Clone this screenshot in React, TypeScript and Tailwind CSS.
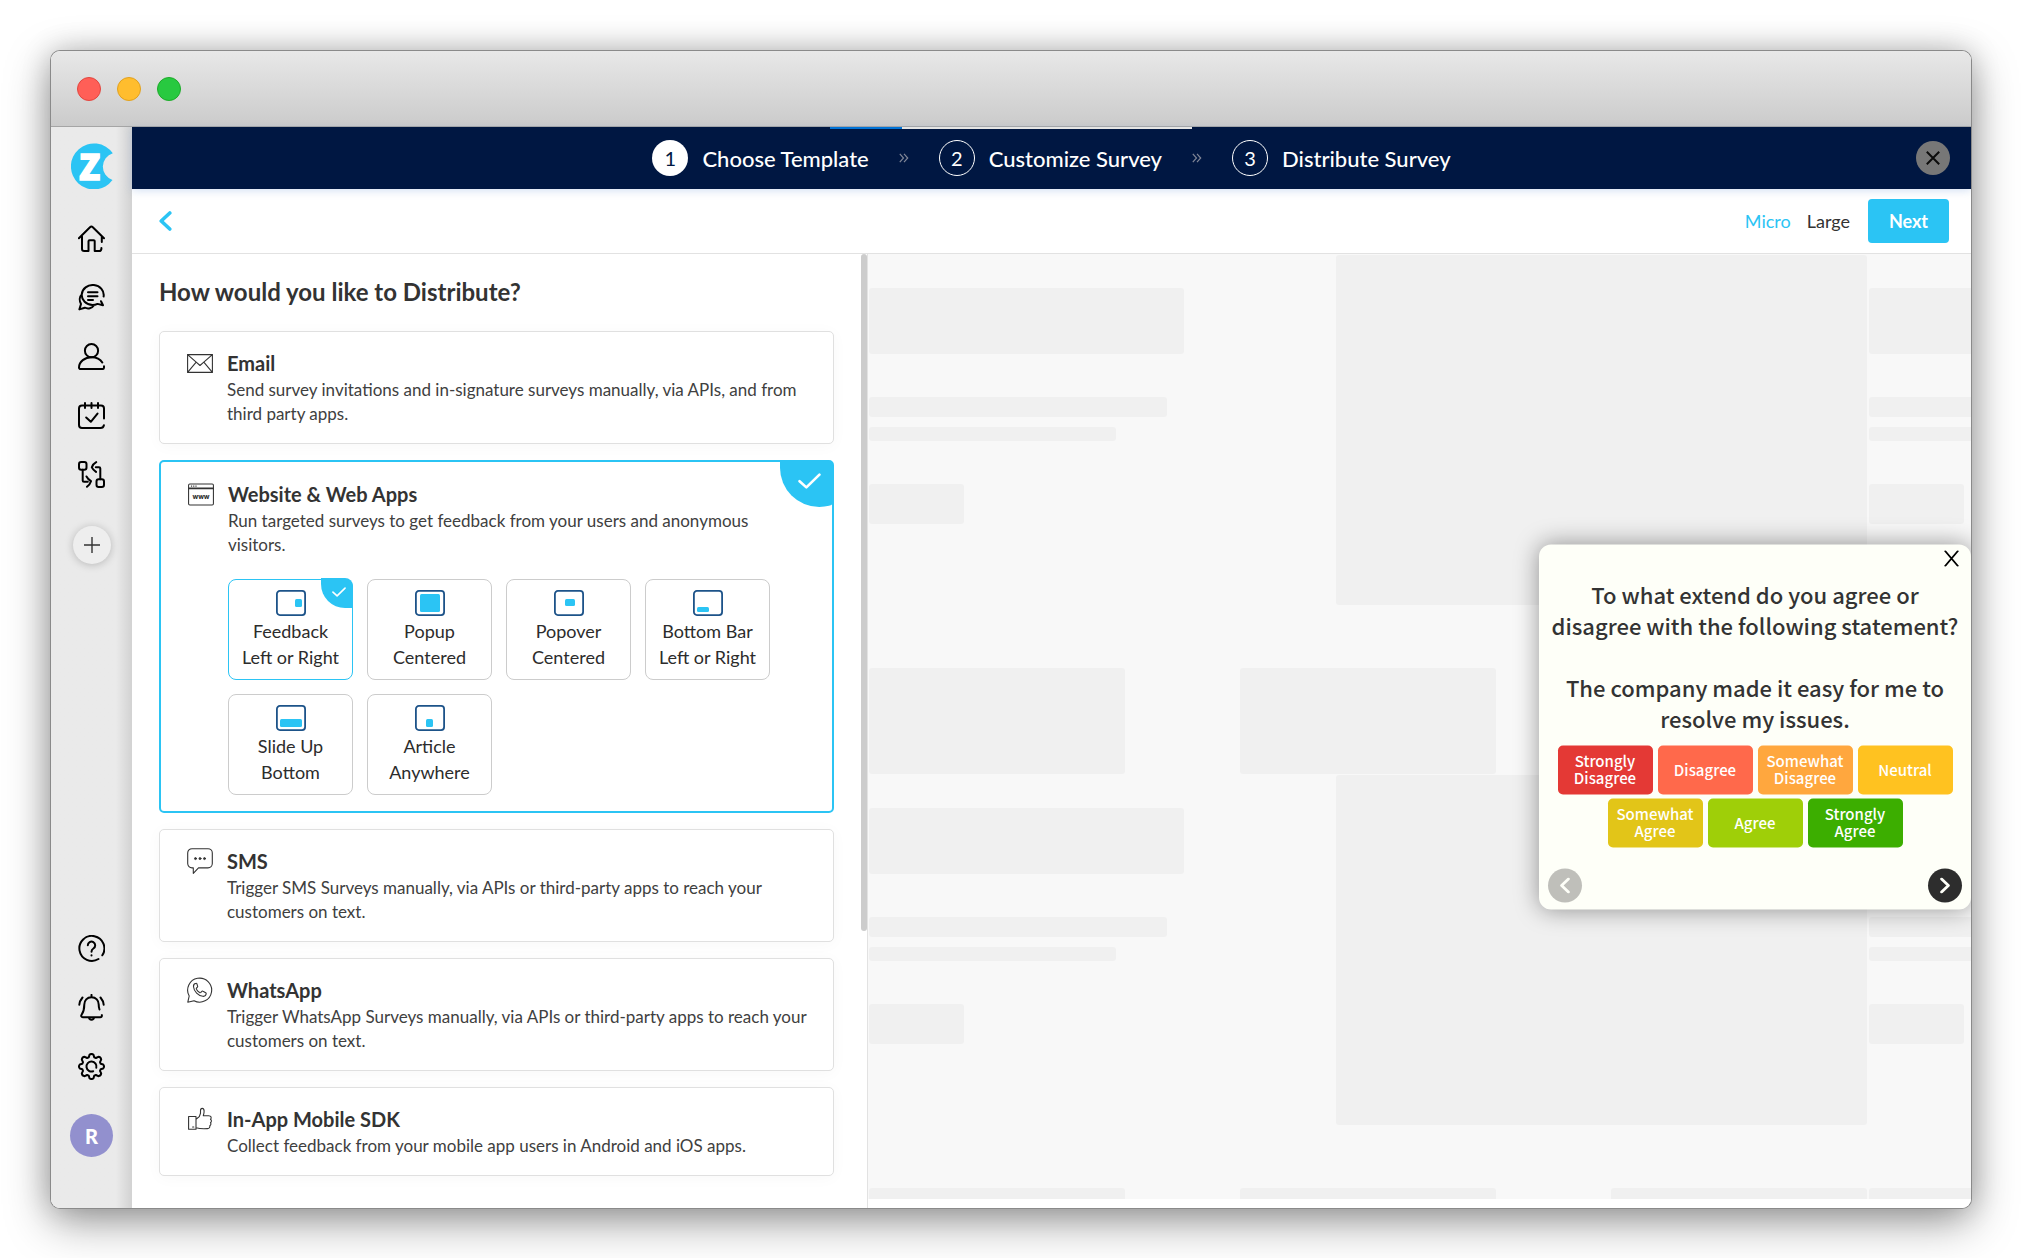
import type { ReactNode } from "react";

function Icon({ children, label }: { children: ReactNode; label: string }) {
  return (
    <button type="button" aria-label={label} className="h-[27px] w-[27px]">
      <svg viewBox="0 0 27 27" className="h-[27px] w-[27px]" fill="none" stroke="#000" strokeWidth="2" strokeLinecap="round" strokeLinejoin="round">
        {children}
      </svg>
    </button>
  );
}

function Logo() {
  return (
    <svg viewBox="0 0 46 46" className="ml-1 h-[46px] w-[46px]" role="img" aria-label="Z">
      <path d="M41.800 10.300 A23 23 0 1 0 41.500 37 A14 14 0 0 1 41.800 10.300 Z" fill="#2bc4f4" />
      <text x="18.500" y="37" textAnchor="middle" fill="#fff" stroke="#fff" strokeWidth="1.500" fontFamily="'Noto Sans CJK SC', sans-serif" fontWeight="900" fontSize="35">
        Z
      </text>
    </svg>
  );
}

function Sidebar() {
  return (
    <nav className="flex w-[81px] shrink-0 flex-col items-center bg-[#eaeaea] bg-linear-to-l from-[#d2d2d2] to-[#eaeaea] to-[16px] pb-[51px] pt-4">
      <Logo />
      <div className="mt-9 flex flex-col gap-8">
        <Icon label="Home">
          <path d="M.9 13.3 12 2.2a2 2 0 0 1 2.8 0L26 13.3M4 11.5v12.3A2.2 2.2 0 0 0 6.2 26h4.3V16.2a1 1 0 0 1 1-1h4.2a1 1 0 0 1 1 1V26h4.4a2.4 2.4 0 0 0 2.3-2.2v-.9M23.8 11.5V17" />
        </Icon>
        <Icon label="Responses">
          <path d="M25.6 12.500A11 10 0 1 0 14.500 21c1.700 0 3.600-.4 5-1.100l5.500 1.300-2-4M10 8.300h9.500M10 12.200h9.500M10 16h5M3.800 10.500C1.600 12.500 1 16.500 3 20l-1.600 5.400 5.400-1.700c3.200 1.500 7.200.6 9-2.200" />
        </Icon>
        <Icon label="Contacts">
          <circle cx="13.500" cy="7.700" r="6.600" />
          <path d="M24.300 19.500C22.500 16.500 18.500 14.300 13.500 14.300 7 14.300 1 18.500 1 24.500a1.500 1.500 0 0 0 1.500 1.600h21.800a1.700 1.700 0 0 0 1.700-1.700v-1.200" />
        </Icon>
        <Icon label="Tasks">
          <path d="M26 16.500V6.500a3 3 0 0 0-3-3H4a3 3 0 0 0-3 3V23a3 3 0 0 0 3 3h18.500a3.500 3.500 0 0 0 3.400-2.800M7 1v5M13.500 1v5M20 1v5M8.200 15.500l4.600 4.300 6.700-8.200" />
        </Icon>
        <Icon label="Workflows">
          <rect x="1" y="1" width="7.500" height="7.800" rx="2.200" />
          <rect x="18.500" y="18.200" width="7.500" height="7.800" rx="2.200" />
          <path d="M4.700 8.800V19.500a1.300 1.300 0 0 0 1.300 1.300h3.800M8.500 15.500c1.500 2.800 2.500 3.500 4.500 4.700-.7 2.300-2 4-4 5.600M22.300 18.200V7.500A1.300 1.300 0 0 0 21 6.200h-3.200M18.200 1.100c-2.300 1.200-3.700 3-4.400 5.300 1 2 2.400 3.300 4.200 4.500" />
        </Icon>
      </div>
      <button type="button" aria-label="Add" className="mt-[38px] flex h-[38px] w-[38px] items-center justify-center rounded-full bg-[#eeeeee] shadow-[0_1px_8px_rgba(0,0,0,0.22)]">
        <svg viewBox="0 0 16 16" className="h-4 w-4" stroke="#333" strokeWidth="1.400">
          <path d="M8 0v16M0 8h16" />
        </svg>
      </button>
      <div className="mt-auto flex flex-col gap-8">
        <Icon label="Help">
          <path d="M20.500 24A12.500 12.500 0 1 1 24.300 20.300" />
          <path d="M9.800 10.300a3.700 3.700 0 1 1 5.600 3.200c-1.300.8-1.900 1.300-1.900 3.200M13.500 20.300v.3" />
        </Icon>
        <Icon label="Notifications">
          <path d="M21.500 15.500c-.6-1.500-.8-3.200-.8-5 0-4-2.700-7.300-7.200-7.300S6.300 6.500 6.300 10.500c0 6-1.300 8.200-2.700 10.200-.8 1.200-.3 2.600 1.200 2.600h17.400c1.300 0 1.900-1 1.600-2.200M13.500 3V.9M11 23.500c.3 3 4.700 3 5 0M4.500 3.500C2.800 5.500 1.500 7.800 1.300 10.800M22.500 3.500c1.700 2 3 4.300 3.200 7.300" />
        </Icon>
        <Icon label="Settings">
          <path d="M11.500 1.800Q13.500.2 15.500 1.800L16.200 4.300 17.900 5 20.300 3.800Q22.900 4 23.200 6.600L22 9.100 22.700 10.800 25.200 11.500Q26.800 13.500 25.200 15.500L22.700 16.200 22 17.900 23.200 20.400Q22.900 23 20.300 23.200L17.900 22 16.200 22.700 15.500 25.200Q13.500 26.800 11.500 25.200L10.800 22.700 9.100 22 6.700 23.200Q4.100 23 3.800 20.400L5 17.900 4.300 16.200 1.800 15.500Q.2 13.500 1.800 11.500L4.300 10.800 5 9.100 3.800 6.600Q4.100 4 6.700 3.800L9.100 5 10.800 4.300Z" />
          <path d="M15.200 18.200A5 5 0 1 1 18.300 14.800" />
        </Icon>
      </div>
      <button type="button" className="mt-[34px] flex h-[43px] w-[43px] items-center justify-center rounded-full bg-[#9290ce] text-xl font-black text-white">
        R
      </button>
    </nav>
  );
}

function Step({ n, label, active }: { n: number; label: string; active?: boolean }) {
  return (
    <li className="flex items-center gap-[14px]">
      <span
        className={
          active
            ? "flex h-9 w-9 items-center justify-center rounded-full bg-white text-xl text-[#001742]"
            : "flex h-9 w-9 items-center justify-center rounded-full border border-white text-xl text-white"
        }
      >
        {n}
      </span>
      <span className="text-[22px] font-medium text-white">{label}</span>
    </li>
  );
}

function Chevrons() {
  return (
    <li aria-hidden="true">
      <svg viewBox="0 0 10 10" className="h-[10px] w-[10px]" fill="none" stroke="#7e8596" strokeWidth="1.200">
        <path d="M.8.8 4.500 5 .8 9.200M5 .8 8.700 5 5 9.200" />
      </svg>
    </li>
  );
}

function Header() {
  return (
    <header className="relative z-10 flex h-[62px] shrink-0 items-center justify-center bg-[#001742] shadow-[0_2px_8px_rgba(120,160,220,0.3)]">
      <div className="absolute top-0 left-[698px] flex h-[2px] w-[362px] bg-[#e4e4e4]">
        <div className="w-1/5 bg-[#0072d6]" />
      </div>
      <ol className="flex items-center gap-[30px]">
        <Step n={1} label="Choose Template" active />
        <Chevrons />
        <Step n={2} label="Customize Survey" />
        <Chevrons />
        <Step n={3} label="Distribute Survey" />
      </ol>
      <button type="button" aria-label="Close" className="absolute right-[21px] flex h-[34px] w-[34px] items-center justify-center rounded-full bg-[#777777]">
        <svg viewBox="0 0 14 14" className="h-[14px] w-[14px]" stroke="#0c0c0c" strokeWidth="2">
          <path d="M.8.8 13.200 13.200M13.200.8.8 13.200" />
        </svg>
      </button>
    </header>
  );
}

function Toolbar() {
  return (
    <div className="flex h-[65px] shrink-0 items-center border-b border-[#e2e2e2] pr-[22px] pl-[27px]">
      <button type="button" aria-label="Back">
        <svg viewBox="0 0 13 20" className="h-5 w-[13px]" fill="none" stroke="#2bc4f4" strokeWidth="3.600" strokeLinejoin="round" strokeLinecap="round">
          <path d="M10.800 2 2.200 10 10.800 18" />
        </svg>
      </button>
      <button type="button" className="ml-auto text-lg text-[#2bc4f4]">Micro</button>
      <button type="button" className="ml-4 text-lg text-[#333]">Large</button>
      <button type="button" className="ml-[18px] h-11 w-[81px] rounded bg-[#2bc4f4] text-lg font-bold text-white">Next</button>
    </div>
  );
}

const thin = { fill: "none", stroke: "#333", strokeWidth: 1.1, strokeLinejoin: "round" as const, strokeLinecap: "round" as const };

const channelIcons: Record<string, ReactNode> = {
  email: (
    <svg viewBox="0 0 26 19" className="h-[19px] w-[26px]" {...thin}>
      <path d="M.6.6h24.800v17.800H.6zM.6.6l8.600 7.600 3.800 3.300 3.800-3.300L25.400.6M.6 18.400 9.200 8.200M25.400 18.400 16.800 8.200" />
    </svg>
  ),
  web: (
    <svg viewBox="0 0 27 23" className="h-[23px] w-[27px]" {...thin}>
      <rect x=".6" y=".6" width="25.800" height="21.800" rx="1.300" />
      <path d="M.6 4.900h25.800M.6 5.500h25.800M3.500 2.800h.4M5.800 2.800h.4M8.100 2.800h.4" />
      <text x="13.500" y="16" textAnchor="middle" fill="#222" stroke="none" fontFamily="Inter, sans-serif" fontWeight="700" fontSize="7">
        www
      </text>
    </svg>
  ),
  sms: (
    <svg viewBox="0 0 26 26" className="h-[26px] w-[26px]" {...thin}>
      <path d="M5 .7h16a4.300 4.300 0 0 1 4.300 4.300v10.600a4.300 4.300 0 0 1-4.300 4.300h-9.500L6.300 25.300v-5.400H5A4.300 4.300 0 0 1 .7 15.600V5A4.300 4.300 0 0 1 5 .7Z" />
      <g strokeWidth=".9">
        <circle cx="8.500" cy="10.600" r="1" fill="#333" />
        <circle cx="13" cy="10.600" r="1" fill="#333" />
        <circle cx="17.500" cy="10.600" r="1" fill="#333" />
      </g>
    </svg>
  ),
  whatsapp: (
    <svg viewBox="0 0 26 26" className="h-[26px] w-[26px]" {...thin}>
      <path d="M.8 25.200 2.200 19A12 12 0 1 1 7 23.700Z" />
      <path d="M9 6.300c-1.500.3-2.700 1.700-2.500 3.500.5 4.800 4.700 9 9.300 9.500 1.800.2 3.200-.9 3.400-2.500.1-.5-.1-.8-.5-1.100l-2.700-1.500c-.5-.3-.9-.2-1.200.2l-.9 1c-.4.400-.8.4-1.300.100-1.400-.9-2.400-1.900-3.200-3.300-.2-.4-.2-.8.2-1.200l.8-.8c.4-.4.400-.7.200-1.200L9.900 6.800c-.2-.4-.5-.6-.9-.5Z" />
    </svg>
  ),
  thumb: (
    <svg viewBox="0 0 26 24" className="h-6 w-[26px]" {...thin}>
      <path d="M1.600 9.500H9v12.800H1.600zM5.600 20h1.200M9 12.300l3.300-2.700 1.200-3.300V3.700c0-3 3.400-3.200 3.600.2.100 2-.3 3.500-.8 4.900h5.400c2.600 0 3.100 2.200 1.800 3.500 1.300 1 1.100 2.600 0 3.400.8 1.200.4 2.500-.7 3 .3 1.700-.5 2.900-2.300 2.900-4.600.4-7.500.3-11.500-.9" />
    </svg>
  ),
};

function ChannelCard({ icon, title, lines, selected, children }: { icon: string; title: string; lines: string[]; selected?: boolean; children?: ReactNode }) {
  return (
    <section
      className={
        selected
          ? "relative flex gap-[14px] rounded-[5px] border-2 border-[#2bc4f4] bg-white pt-[18px] pb-4 pl-[27px]"
          : "relative flex gap-[14px] rounded-[5px] border border-[#e0e0e0] bg-white py-[17px] pl-[27px] shadow-[0_2px_16px_rgba(0,0,0,0.03)]"
      }
    >
      <div className="flex h-7 w-[26px] shrink-0 items-center">{channelIcons[icon]}</div>
      <div className="min-w-0 flex-1">
        <h3 className="text-xl leading-7 font-bold text-[#333]">{title}</h3>
        <p className="mt-px text-[17px] leading-6 text-[#404040]">
          {lines.map((line) => (
            <span key={line} className="block">{line}</span>
          ))}
        </p>
        {children}
      </div>
      {selected && (
        <div className="absolute -top-px -right-px flex h-[46px] w-[53px] items-center justify-center rounded-tr-[4px] rounded-bl-[40px] bg-[#2bc4f4] pb-[6px] pl-[6px] [border-bottom-right-radius:14px_4px]">
          <Tick className="h-4 w-[23px]" />
        </div>
      )}
    </section>
  );
}

function Tick({ className }: { className: string }) {
  return (
    <svg viewBox="0 0 22 15" className={className} fill="none" stroke="#fff" strokeWidth="2.500" strokeLinecap="round" strokeLinejoin="round">
      <path d="M1.500 7.700 8 13.600 20.500 1.400" />
    </svg>
  );
}

type Option = { top: string; bottom: string; box: [number, number, number, number]; selected?: boolean };

const options: Option[] = [
  { top: "Feedback", bottom: "Left or Right", box: [19, 9, 7, 8], selected: true },
  { top: "Popup", bottom: "Centered", box: [5, 4, 20, 18] },
  { top: "Popover", bottom: "Centered", box: [11, 9, 10, 7] },
  { top: "Bottom Bar", bottom: "Left or Right", box: [4, 17, 12, 5] },
  { top: "Slide Up", bottom: "Bottom", box: [4, 14, 22, 8] },
  { top: "Article", bottom: "Anywhere", box: [11, 14, 7, 8] },
];

function OptionCard({ top, bottom, box, selected }: Option) {
  const [x, y, w, h] = box;
  return (
    <button
      type="button"
      aria-pressed={!!selected}
      className={
        selected
          ? "relative flex h-[101px] w-[125px] flex-col items-center rounded-lg border border-[#2bc4f4] pt-[10px] text-lg leading-[26px] text-[#2c2c2c]"
          : "relative flex h-[101px] w-[125px] flex-col items-center rounded-lg border border-[#cccccc] pt-[10px] text-lg leading-[26px] text-[#2c2c2c]"
      }
    >
      <svg viewBox="0 0 30 26" className="mb-[2px] h-[26px] w-[30px]">
        <rect x=".9" y=".9" width="28.200" height="24.200" rx="3" fill="#fff" stroke="#1d5389" strokeWidth="1.800" />
        <rect x={x} y={y} width={w} height={h} rx="1.500" fill="#2bc4f4" />
      </svg>
      <span>{top}</span>
      <span>{bottom}</span>
      {selected && (
        <span className="absolute -top-[2px] -right-px flex h-[30px] w-8 items-center justify-center rounded-tr-lg rounded-bl-[24px] bg-[#2bc4f4] pb-[2px] pl-1">
          <Tick className="h-[10px] w-[14px]" />
        </span>
      )}
    </button>
  );
}

function DistributePanel() {
  return (
    <div className="flex w-2/5 shrink-0 border-r border-[#e2e2e2] bg-white">
      <div className="min-w-0 flex-1 overflow-hidden pt-[22px] pr-[27px] pl-[27px]">
        <h2 className="text-2xl leading-8 font-bold text-[#333]">How would you like to Distribute?</h2>
        <div className="mt-[23px] flex flex-col gap-4">
          <ChannelCard icon="email" title="Email" lines={["Send survey invitations and in-signature surveys manually, via APIs, and from", "third party apps."]} />
          <ChannelCard icon="web" title="Website & Web Apps" selected lines={["Run targeted surveys to get feedback from your users and anonymous", "visitors."]}>
            <div className="mt-[22px] flex flex-wrap gap-[14px]">
              {options.map((o) => (
                <OptionCard key={o.top} {...o} />
              ))}
            </div>
          </ChannelCard>
          <ChannelCard icon="sms" title="SMS" lines={["Trigger SMS Surveys manually, via APIs or third-party apps to reach your", "customers on text."]} />
          <ChannelCard icon="whatsapp" title="WhatsApp" lines={["Trigger WhatsApp Surveys manually, via APIs or third-party apps to reach your", "customers on text."]} />
          <ChannelCard icon="thumb" title="In-App Mobile SDK" lines={["Collect feedback from your mobile app users in Android and iOS apps."]} />
        </div>
      </div>
      <div className="w-[6px]">
        <div className="h-[71%] rounded-full bg-[#cccccc]" />
      </div>
    </div>
  );
}

function Tile() {
  return (
    <div className="h-[520px] w-[1000px] shrink-0 pt-px pr-[2px]">
      <div className="flex h-[350px]">
        <div className="w-[467px] pt-[33px]">
          <div className="h-[66px] w-[315px] rounded-[3px] bg-[#f0f0f0]" />
          <div className="mt-[43px] h-5 w-[298px] rounded-[3px] bg-[#f0f0f0]" />
          <div className="mt-[10px] h-[14px] w-[247px] rounded-[3px] bg-[#f0f0f0]" />
          <div className="mt-[43px] h-10 w-[95px] rounded-[3px] bg-[#f0f0f0]" />
        </div>
        <div className="flex-1 rounded-[3px] bg-[#f0f0f0]" />
      </div>
      <div className="mt-[63px] flex justify-between">
        <div className="h-[106px] w-64 rounded-[3px] bg-[#f0f0f0]" />
        <div className="h-[106px] w-64 rounded-[3px] bg-[#f0f0f0]" />
        <div className="h-[106px] w-64 rounded-[3px] bg-[#f0f0f0]" />
      </div>
    </div>
  );
}

function Answer({ label, color }: { label: string; color: string }) {
  return (
    <button type="button" className={`h-[49px] w-[95px] rounded-[5px] px-2 pb-[2px] text-[15px] leading-[17px] font-medium text-white ${color}`}>
      {label}
    </button>
  );
}

function SurveyPopup() {
  return (
    <div className="absolute top-1/2 right-0 flex h-[365px] w-[432px] -translate-y-1/2 flex-col rounded-xl bg-[#fefff8] pt-[34px] font-['Noto_Sans_CJK_SC',sans-serif] shadow-[0_0_24px_rgba(0,0,0,0.4)]">
      <button type="button" aria-label="Close survey" className="absolute top-[6px] right-3">
        <svg viewBox="0 0 15 16" className="h-4 w-[15px]" stroke="#000" strokeWidth="1.800">
          <path d="M.7 0 14.300 16M14.300 0 .7 16" />
        </svg>
      </button>
      <p className="text-center text-[22px] leading-[31px] font-medium text-[#333]">
        To what extend do you agree or
        <br />
        disagree with the following statement?
        <br />
        <br />
        The company made it easy for me to
        <br />
        resolve my issues.
      </p>
      <div className="mt-3 flex justify-center gap-[5px]">
        <Answer label="Strongly Disagree" color="bg-[#e43935]" />
        <Answer label="Disagree" color="bg-[#ff694b]" />
        <Answer label="Somewhat Disagree" color="bg-[#ffa73e]" />
        <Answer label="Neutral" color="bg-[#ffc220]" />
      </div>
      <div className="mt-1 flex justify-center gap-[5px]">
        <Answer label="Somewhat Agree" color="bg-[#e2c518]" />
        <Answer label="Agree" color="bg-[#9fcf08]" />
        <Answer label="Strongly Agree" color="bg-[#3cae00]" />
      </div>
      <div className="mt-auto flex justify-between px-[9px] pb-[7px]">
        <button type="button" aria-label="Previous" className="flex h-[34px] w-[34px] items-center justify-center rounded-full bg-[#bfbfba]">
          <svg viewBox="0 0 10 16" className="h-4 w-[10px]" fill="none" stroke="#fefff8" strokeWidth="2.800" strokeLinecap="round" strokeLinejoin="round">
            <path d="M8.400 1.500 1.600 8l6.800 6.500" />
          </svg>
        </button>
        <button type="button" aria-label="Next question" className="flex h-[34px] w-[34px] items-center justify-center rounded-full bg-[#2d2d2d]">
          <svg viewBox="0 0 10 16" className="h-4 w-[10px]" fill="none" stroke="#fefff8" strokeWidth="2.800" strokeLinecap="round" strokeLinejoin="round">
            <path d="M1.600 1.500 8.400 8l-6.800 6.500" />
          </svg>
        </button>
      </div>
    </div>
  );
}

function Preview() {
  return (
    <div className="min-w-0 flex-1 bg-white pb-[9px]">
      <div className="relative h-full overflow-hidden bg-[#f8f8f8] pl-px">
        <div className="flex">
          <Tile />
          <Tile />
        </div>
        <div className="flex">
          <Tile />
          <Tile />
        </div>
        <SurveyPopup />
      </div>
    </div>
  );
}

export default function App() {
  return (
    <div className="flex h-screen bg-white px-[51px] pt-[51px] pb-[50px] font-['Lato',sans-serif]">
      <div className="flex min-w-0 flex-1 flex-col overflow-hidden rounded-[9px] bg-white shadow-[0_0_0_1px_#8a8a8a,0_0_30px_rgba(0,0,0,0.2),0_14px_46px_rgba(0,0,0,0.38)]">
        <div className="flex h-[76px] shrink-0 items-center gap-4 border-b border-[#a5a5a5] bg-linear-to-b from-[#e8e8e8] to-[#cbcbcb] pl-[26px]">
          <span className="h-6 w-6 rounded-full border border-[#e2463f] bg-[#ff5f57]" />
          <span className="h-6 w-6 rounded-full border border-[#e1a11f] bg-[#ffbd2e]" />
          <span className="h-6 w-6 rounded-full border border-[#1dab29] bg-[#28c940]" />
        </div>
        <div className="flex min-h-0 flex-1">
          <Sidebar />
          <main className="flex min-w-0 flex-1 flex-col">
            <Header />
            <Toolbar />
            <div className="flex min-h-0 flex-1">
              <DistributePanel />
              <Preview />
            </div>
          </main>
        </div>
      </div>
    </div>
  );
}
